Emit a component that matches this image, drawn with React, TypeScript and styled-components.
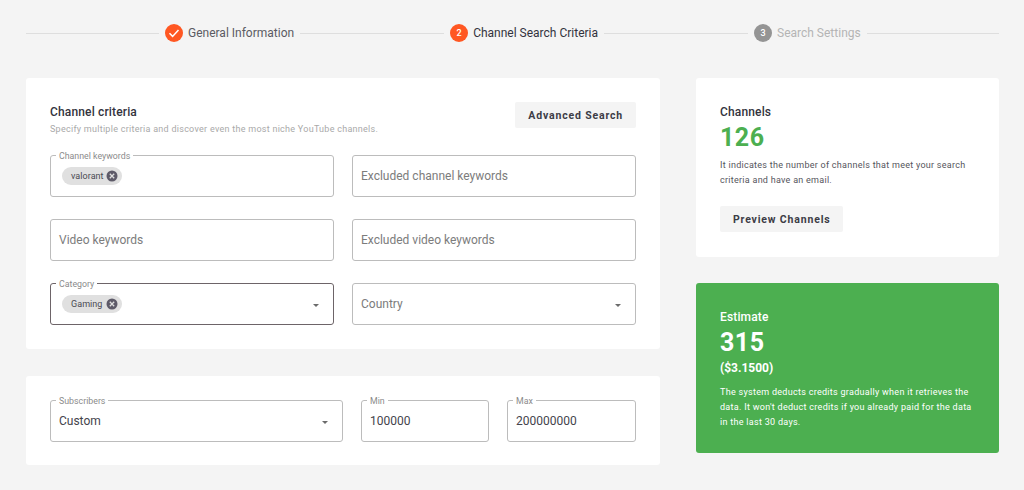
import React from 'react';
import styled, { createGlobalStyle } from 'styled-components';

const GlobalStyle = createGlobalStyle`
  html, body {
    margin: 0;
    padding: 0;
    background: #f4f4f4;
    font-family: Roboto, "Liberation Sans", sans-serif;
  }
`;

const Page = styled.div`
  width: 1024px;
  height: 490px;
  box-sizing: border-box;
  padding: 24px 25px 0 26px;
  overflow: hidden;
`;

const Stepper = styled.div`
  display: flex;
  align-items: center;
  height: 18px;
  margin-bottom: 36px;
`;

const StepLine = styled.div<{ $width: number }>`
  flex: none;
  width: ${(p) => p.$width}px;
  height: 1px;
  background: #dedede;
`;

const Step = styled.div<{ $state: 'done' | 'active' | 'todo' }>`
  flex: none;
  display: flex;
  align-items: center;
  gap: 5px;
  margin: 0 6px;
  font-size: 12px;
  white-space: nowrap;
  color: ${(p) =>
    p.$state === 'done' ? '#5b5b63' : p.$state === 'active' ? '#33333d' : '#b4b4b4'};
`;

const StepIcon = styled.div<{ $grey?: boolean }>`
  width: 18px;
  height: 18px;
  border-radius: 50%;
  display: flex;
  align-items: center;
  justify-content: center;
  font-size: 9px;
  font-weight: 500;
  color: #fff;
  background: ${(p) => (p.$grey ? '#949494' : '#ff5722')};
`;

const Columns = styled.div`
  display: grid;
  grid-template-columns: 634px 303px;
  column-gap: 36px;
  align-items: start;
`;

const Column = styled.div<{ $gap: number }>`
  display: flex;
  flex-direction: column;
  gap: ${(p) => p.$gap}px;
`;

const Card = styled.section<{ $green?: boolean; $padding?: string }>`
  box-sizing: border-box;
  padding: ${(p) => p.$padding ?? '24px'};
  border-radius: 3px;
  background: ${(p) => (p.$green ? '#4caf50' : '#fff')};
  color: ${(p) => (p.$green ? '#fff' : '#33333d')};
`;

const CardHead = styled.div`
  display: flex;
  justify-content: space-between;
  height: 53px;
`;

const Title = styled.h2`
  margin: 0;
  padding-top: 3px;
  font-size: 12px;
  line-height: 15px;
  font-weight: 500;
  letter-spacing: 0.15px;
`;

const Subtitle = styled.p`
  margin: 3px 0 0;
  font-size: 9px;
  line-height: 12px;
  letter-spacing: 0.27px;
  color: #a9a9a9;
`;

const ActionButton = styled.button`
  height: 26px;
  border: 0;
  border-radius: 2px;
  padding: 0 13px;
  background: #f4f4f4;
  font-family: inherit;
  font-size: 10.5px;
  font-weight: 700;
  letter-spacing: 0.83px;
  color: #3c3c46;
`;

const FieldGrid = styled.div`
  display: grid;
  grid-template-columns: 284px 284px;
  column-gap: 18px;
  row-gap: 22px;
`;

const RangeRow = styled.div`
  display: grid;
  grid-template-columns: 293px 128px 129px;
  column-gap: 18px;
`;

const Field = styled.fieldset<{ $focused?: boolean }>`
  box-sizing: border-box;
  display: flex;
  align-items: center;
  height: 42px;
  min-width: 0;
  margin: 0;
  padding: 0 12px 0 8px;
  border: 1px solid ${(p) => (p.$focused ? '#6d6468' : '#bcbcbc')};
  border-radius: 3px;
  background: #fff;
`;

const FieldLabel = styled.legend`
  height: 0;
  margin-left: -3px;
  padding: 0 3px;
  font-size: 8.8px;
  line-height: 0;
  color: #8b8b8b;
`;

const FieldText = styled.span<{ $placeholder?: boolean }>`
  flex: 1;
  font-size: 12px;
  color: ${(p) => (p.$placeholder ? '#7c7c7c' : '#44444c')};
`;

const Chips = styled.div`
  flex: 1;
  display: flex;
  padding-left: 3px;
`;

const Chip = styled.div`
  box-sizing: border-box;
  display: flex;
  align-items: center;
  justify-content: space-between;
  width: 60px;
  height: 18px;
  padding: 0 4px 0 9px;
  border-radius: 9px;
  background: #e0e0e0;
  font-size: 9px;
  letter-spacing: 0.05px;
  color: #4a4a52;
`;

const Arrow = styled.div`
  width: 0;
  height: 0;
  margin-right: 2px;
  margin-top: 2px;
  border-left: 3.5px solid transparent;
  border-right: 3.5px solid transparent;
  border-top: 3.5px solid #6b6b6b;
`;

const BigNumber = styled.div<{ $green?: boolean }>`
  margin-top: 3px;
  font-size: 25px;
  line-height: 30px;
  font-weight: 700;
  letter-spacing: 0.5px;
  color: ${(p) => (p.$green ? '#4caf50' : '#fff')};
`;

const Price = styled.div`
  margin-top: 2px;
  font-size: 12px;
  line-height: 16px;
  font-weight: 700;
`;

const Note = styled.p<{ $top: number; $light?: boolean }>`
  margin: ${(p) => p.$top}px 0 0;
  font-size: 9px;
  line-height: 15px;
  letter-spacing: ${(p) => (p.$light ? '0.29px' : '0.27px')};
  color: ${(p) => (p.$light ? '#fff' : '#55555c')};
`;

const ButtonRow = styled.div`
  margin-top: 18px;
`;

const CheckIcon = () => (
  <svg width="12" height="12" viewBox="0 0 12 12" fill="none">
    <path d="M1.5 6.3 4.6 9.4 10.5 3" stroke="#fff" strokeWidth="1.5" />
  </svg>
);

const ChipDelete = () => (
  <svg width="12" height="12" viewBox="0 0 12 12">
    <circle cx="6" cy="6" r="5.5" fill="#5d5a68" />
    <path d="M3.8 3.8 8.2 8.2M8.2 3.8 3.8 8.2" stroke="#dedede" strokeWidth="1.3" />
  </svg>
);

const Select = ({
  label,
  text,
  chip,
  focused,
}: {
  label?: string;
  text?: string;
  chip?: string;
  focused?: boolean;
}) => (
  <Field $focused={focused}>
    {label && <FieldLabel>{label}</FieldLabel>}
    {chip ? (
      <Chips>
        <Chip>
          {chip}
          <ChipDelete />
        </Chip>
      </Chips>
    ) : (
      <FieldText $placeholder={!label}>{text}</FieldText>
    )}
    <Arrow />
  </Field>
);

export default function App() {
  return (
    <>
      <GlobalStyle />
      <Page>
        <Stepper>
          <StepLine $width={133} />
          <Step $state="done">
            <StepIcon>
              <CheckIcon />
            </StepIcon>
            General Information
          </Step>
          <StepLine $width={144} />
          <Step $state="active">
            <StepIcon>2</StepIcon>
            Channel Search Criteria
          </Step>
          <StepLine $width={144} />
          <Step $state="todo">
            <StepIcon $grey>3</StepIcon>
            Search Settings
          </Step>
          <StepLine $width={132} />
        </Stepper>

        <Columns>
          <Column $gap={27}>
            <Card>
              <CardHead>
                <div>
                  <Title>Channel criteria</Title>
                  <Subtitle>
                    Specify multiple criteria and discover even the most niche YouTube channels.
                  </Subtitle>
                </div>
                <ActionButton>Advanced Search</ActionButton>
              </CardHead>
              <FieldGrid>
                <Field>
                  <FieldLabel>Channel keywords</FieldLabel>
                  <Chips>
                    <Chip>
                      valorant
                      <ChipDelete />
                    </Chip>
                  </Chips>
                </Field>
                <Field>
                  <FieldText $placeholder>Excluded channel keywords</FieldText>
                </Field>
                <Field>
                  <FieldText $placeholder>Video keywords</FieldText>
                </Field>
                <Field>
                  <FieldText $placeholder>Excluded video keywords</FieldText>
                </Field>
                <Select label="Category" chip="Gaming" focused />
                <Select text="Country" />
              </FieldGrid>
            </Card>
            <Card $padding="24px 24px 23px">
              <RangeRow>
                <Select label="Subscribers" text="Custom" />
                <Field>
                  <FieldLabel>Min</FieldLabel>
                  <FieldText>100000</FieldText>
                </Field>
                <Field>
                  <FieldLabel>Max</FieldLabel>
                  <FieldText>200000000</FieldText>
                </Field>
              </RangeRow>
            </Card>
          </Column>

          <Column $gap={26}>
            <Card $padding="24px 24px 25px">
              <Title>Channels</Title>
              <BigNumber $green>126</BigNumber>
              <Note $top={5}>
                It indicates the number of channels that meet your search criteria and have an
                email.
              </Note>
              <ButtonRow>
                <ActionButton>Preview Channels</ActionButton>
              </ButtonRow>
            </Card>
            <Card $green $padding="24px 24px 23px">
              <Title>Estimate</Title>
              <BigNumber>315</BigNumber>
              <Price>($3.1500)</Price>
              <Note $top={9} $light>
                The system deducts credits gradually when it retrieves the data. It won't deduct
                credits if you already paid for the data in the last 30 days.
              </Note>
            </Card>
          </Column>
        </Columns>
      </Page>
    </>
  );
}
